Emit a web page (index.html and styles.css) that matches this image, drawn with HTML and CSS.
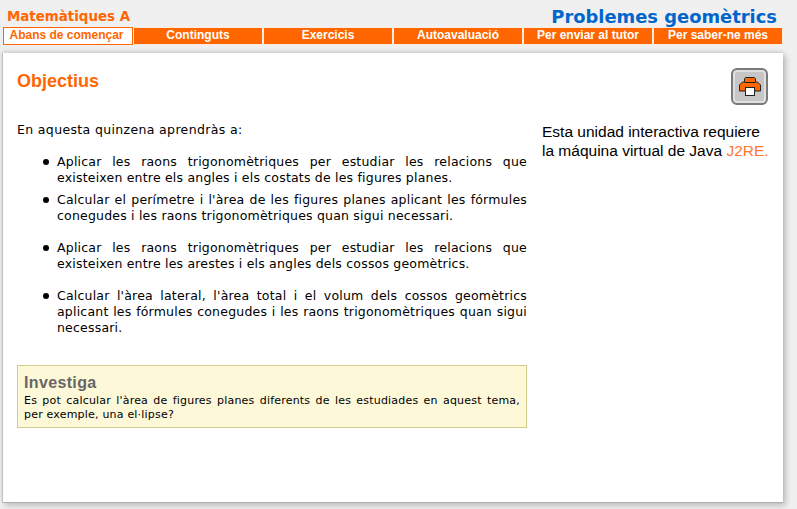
FILE: index.html
```html
<!DOCTYPE html>
<html lang="ca">
<head>
    <meta charset="UTF-8">
    <title>Problemes geomètrics</title>
    <link rel="stylesheet" href="styles.css">
</head>
<body>
    <!-- Header -->
    <div class="header">
        <div class="course">Matemàtiques A</div>
        <div class="unit">Problemes geomètrics</div>
    </div>

    <!-- Menu -->
    <div class="menu">
        <a class="tab active">Abans de començar</a>
        <a class="tab">Continguts</a>
        <a class="tab">Exercicis</a>
        <a class="tab">Autoavaluació</a>
        <a class="tab">Per enviar al tutor</a>
        <a class="tab">Per saber-ne més</a>
    </div>

    <!-- Content panel -->
    <div class="panel">
        <div class="panel-top">
            <h1>Objectius</h1>
            <div class="print-button">
                <svg width="22" height="20" viewBox="0 0 22 20">
                    <path d="M6.5 .5h9l1 1v3.5h2l3 3v6h-21v-6l3-3h2v-3.5z" fill="#ff6600" stroke="#222" stroke-width="1"/>
                    <path d="M5.5 5.5h11" stroke="#222" stroke-width="1" fill="none"/>
                    <rect x="6.5" y="10.5" width="9" height="8" fill="#fff" stroke="#222" stroke-width="1"/>
                </svg>
            </div>
        </div>
        <div class="columns">
            <div class="main">
                <p class="intro">En aquesta quinzena aprendràs a:</p>
                <ul class="goals">
                    <li class="tight">Aplicar les raons trigonomètriques per estudiar les relacions que existeixen entre els angles i els costats de les figures planes.</li>
                    <li>Calcular el perímetre i l'àrea de les figures planes aplicant les fórmules conegudes i les raons trigonomètriques quan sigui necessari.</li>
                    <li>Aplicar les raons trigonomètriques per estudiar les relacions que existeixen entre les arestes i els angles dels cossos geomètrics.</li>
                    <li>Calcular l'àrea lateral, l'àrea total i el volum dels cossos geomètrics aplicant les fórmules conegudes i les raons trigonomètriques quan sigui necessari.</li>
                </ul>
                <div class="research">
                    <h2>Investiga</h2>
                    <p>Es pot calcular l'àrea de figures planes diferents de les estudiades en aquest tema, per exemple, una el·lipse?</p>
                </div>
            </div>
            <div class="side">
                Esta unidad interactiva requiere<br>
                la máquina virtual de Java <a class="link">J2RE.</a>
            </div>
        </div>
    </div>
</body>
</html>
```

FILE: styles.css
```css
/* Global */
html, body {
    margin: 0;
    padding: 0;
    height: 100%;
    overflow: hidden;
}

body {
    background: #f0f0f0;
    font-family: "DejaVu Sans", sans-serif;
    color: #000;
}

/* Header */
.header {
    display: flex;
    justify-content: space-between;
    align-items: flex-end;
    height: 27px;
    padding: 0 20px 0 7px;
    box-sizing: border-box;
}

.course {
    color: #ff6600;
    font-size: 13.4px;
    font-weight: bold;
    line-height: 17px;
    padding-bottom: 2px;
}

.unit {
    color: #0066cc;
    font-size: 17.9px;
    font-weight: bold;
    line-height: 22px;
    position: relative;
    top: 1px;
}

/* Menu */
.menu {
    display: flex;
    margin-left: 3px;
    width: 780px;
}

.tab {
    width: 130px;
    height: 18px;
    box-sizing: border-box;
    background: #ff6600;
    border: 1px solid #ffeadc;
    color: #fff;
    font-family: "Liberation Sans", sans-serif;
    font-size: 12px;
    font-weight: bold;
    line-height: 15px;
    text-align: center;
}

.tab.active {
    background: #fff;
    border: 1px solid #ff6600;
    padding-right: 3px;
    color: #ff6600;
}

/* Panel */
.panel {
    box-sizing: border-box;
    width: 781px;
    height: 450px;
    margin: 8px 0 0 2px;
    background: #fff;
    border-left: 1px solid #c0c0c0;
    border-bottom: 1px solid #b0b0b0;
    box-shadow: 3px 3px 6px rgba(0, 0, 0, 0.2), 0 -2px 4px rgba(0, 0, 0, 0.12);
    padding: 15px 11px 0 14px;
}

.panel-top {
    display: flex;
    justify-content: space-between;
    align-items: flex-start;
    height: 54px;
    padding-right: 4px;
}

h1 {
    margin: 3px 0 0;
    color: #ff6600;
    font-family: "Liberation Sans", sans-serif;
    font-size: 18px;
    font-weight: bold;
    line-height: 21px;
}

.print-button {
    display: flex;
    align-items: center;
    justify-content: center;
    box-sizing: border-box;
    width: 37px;
    height: 37px;
    border: 2px solid #7a7a7a;
    border-radius: 6px;
    background: #c6c6c6;
    box-shadow: inset 0 0 0 2px #e0e0e0;
}

.columns {
    display: flex;
}

.main {
    flex: none;
    width: 510px;
    font-size: 12.5px;
    letter-spacing: 0.35px;
    line-height: 16px;
}

.intro {
    margin: 0 0 16px;
}

.goals {
    margin: 0;
    padding: 0 0 0 40px;
    list-style: none;
    letter-spacing: 0.2px;
}

.goals li {
    position: relative;
    text-align: justify;
    margin-bottom: 16px;
}

.goals li::before {
    content: "";
    position: absolute;
    left: -14px;
    top: 5px;
    width: 6px;
    height: 6px;
    border-radius: 50%;
    background: #000;
}

.goals li.tight {
    margin-bottom: 6px;
}

/* Research box */
.research {
    margin-top: 29px;
    background: #fdf8d8;
    border: 1px solid #d4cc8c;
    padding: 7px 6px 5px 6px;
}

.research h2 {
    margin: 0 0 2px;
    color: #666;
    font-family: "Liberation Sans", sans-serif;
    font-size: 16px;
    font-weight: bold;
    line-height: 19px;
}

.research p {
    margin: 0;
    font-size: 11px;
    letter-spacing: 0.2px;
    line-height: 14px;
    text-align: justify;
}

/* Side note */
.side {
    flex: 1;
    margin-left: 15px;
    font-family: "Liberation Sans", sans-serif;
    font-size: 15.5px;
    line-height: 19px;
}

.link {
    color: #ff7733;
}
```
